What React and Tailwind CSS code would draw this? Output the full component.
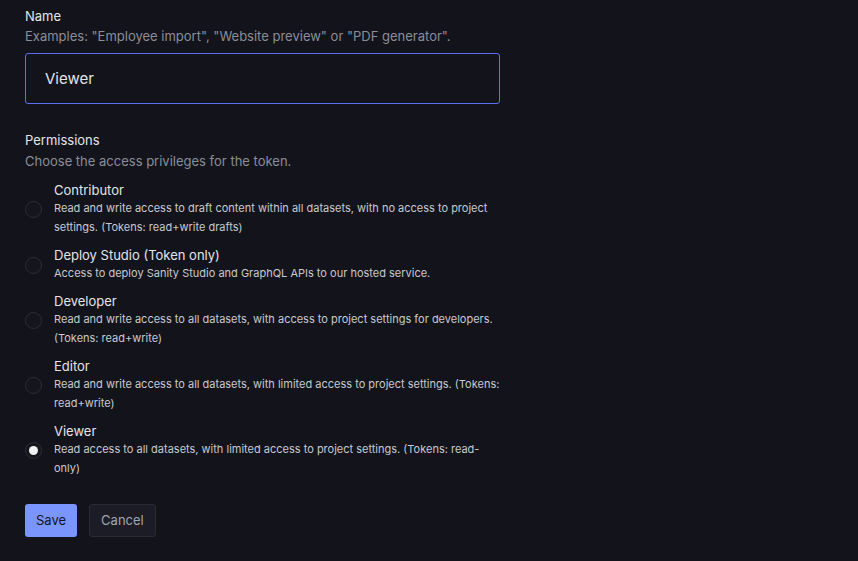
import React, { useState } from 'react';

const roles = [
  {
    id: 'contributor',
    title: 'Contributor',
    description: 'Read and write access to draft content within all datasets, with no access to project settings. (Tokens: read+write drafts)',
  },
  {
    id: 'deploy',
    title: 'Deploy Studio (Token only)',
    description: 'Access to deploy Sanity Studio and GraphQL APIs to our hosted service.',
  },
  {
    id: 'developer',
    title: 'Developer',
    description: 'Read and write access to all datasets, with access to project settings for developers. (Tokens: read+write)',
  },
  {
    id: 'editor',
    title: 'Editor',
    description: 'Read and write access to all datasets, with limited access to project settings. (Tokens: read+write)',
  },
  {
    id: 'viewer',
    title: 'Viewer',
    description: 'Read access to all datasets, with limited access to project settings. (Tokens: read-only)',
  },
];

const App = () => {
  const [name, setName] = useState('Viewer');
  const [role, setRole] = useState('viewer');

  return (
    <div
      className="min-h-[561px] bg-[#13141b] text-[#e3e4e8] antialiased"
      style={{ fontFamily: 'Inter, "Noto Sans", sans-serif' }}
    >
      <div className="w-[475px] ml-[25px] pt-[8px]">
        {/* Name field */}
        <label className="block text-[13px] leading-[17px]">Name</label>
        <p className="mt-[3px] text-[13px] leading-[17px] text-[#8b8d98]">
          Examples: "Employee import", "Website preview" or "PDF generator".
        </p>
        <input
          type="text"
          value={name}
          onChange={(e) => setName(e.target.value)}
          className="mt-[8px] block w-full h-[51px] px-[19px] bg-transparent border border-[#5b6ff2] rounded-[3px] text-[15px] text-[#e3e4e8] outline-none"
        />

        {/* Permissions */}
        <div className="mt-[28px]">
          <div className="text-[13px] leading-[17px]">Permissions</div>
          <p className="mt-[4px] text-[13px] leading-[17px] text-[#8b8d98]">
            Choose the access privileges for the token.
          </p>
        </div>

        <div className="mt-[12px] flex flex-col gap-[10px]">
          {roles.map((r) => {
            const checked = role === r.id;
            return (
              <label key={r.id} className="flex items-center gap-[12px] cursor-pointer">
                <input
                  type="radio"
                  name="role"
                  className="sr-only"
                  checked={checked}
                  onChange={() => setRole(r.id)}
                />
                <span className="shrink-0 w-[17px] h-[17px] rounded-full border border-[#2c2d36] bg-[#15161d] flex items-center justify-center">
                  {checked && <span className="w-[9px] h-[9px] rounded-full bg-[#f2f2f5]" />}
                </span>
                <span className="flex-1 min-w-0">
                  <span className="block text-[13px] leading-[17px] text-[#e3e4e8]">{r.title}</span>
                  <span className="block text-[11px] leading-[19px] text-[#c8c9d0]">{r.description}</span>
                </span>
              </label>
            );
          })}
        </div>

        {/* Actions */}
        <div className="mt-[26px] flex gap-[12px]">
          <button
            type="button"
            className="h-[33px] px-[11px] rounded-[3px] bg-[#7b95ff] text-[#13141b] text-[13px]"
          >
            Save
          </button>
          <button
            type="button"
            className="h-[33px] px-[11px] rounded-[3px] bg-[#1b1c25] border border-[#2a2b35] text-[#a3a5b0] text-[13px]"
          >
            Cancel
          </button>
        </div>
      </div>
    </div>
  );
};

export default App;
